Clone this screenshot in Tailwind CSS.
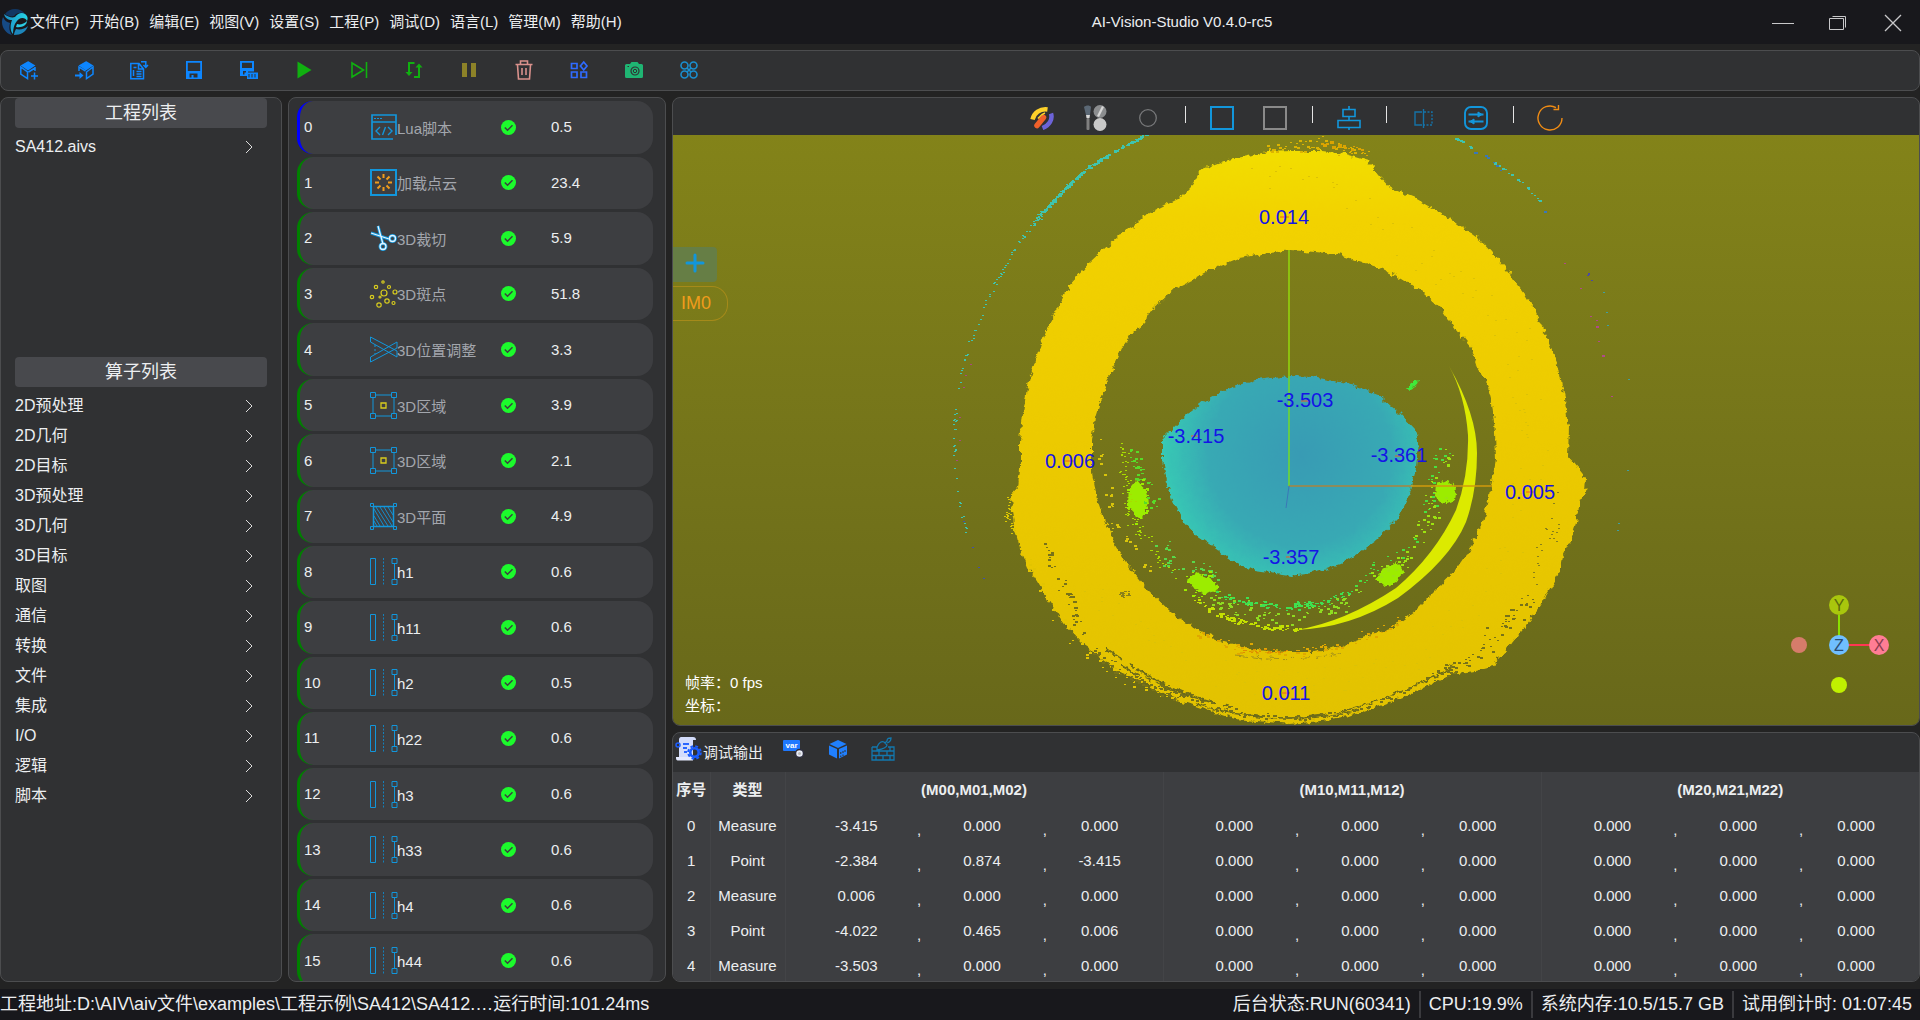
<!DOCTYPE html>
<html lang="zh-CN">
<head>
<meta charset="utf-8">
<title>AI-Vision-Studio</title>
<script src="https://cdn.jsdelivr.net/npm/@tailwindcss/browser@4"></script>
</head>
<body class="flex h-screen flex-col overflow-hidden bg-[#232323] font-['Liberation_Sans','Noto_Sans_CJK_SC',sans-serif] text-[15px] leading-5 text-[#eceef0]">

<!-- Title bar -->
<header class="relative flex h-11 shrink-0 items-center justify-between bg-[#18181c]">
  <div class="flex items-center">
    <svg class="ml-px mr-px h-7 w-7" viewBox="0 0 28 28" aria-hidden="true">
      <defs><linearGradient id="logo" x1="0" y1="0" x2="1" y2="0"><stop offset="0" stop-color="#1c8fc4"/><stop offset="1" stop-color="#25d3e6"/></linearGradient></defs>
      <path d="M4 6C9-1 20 0 24 6c-3-2-8-2-11 2-3 1-6 0-9-2z" fill="#123763"/>
      <path d="M3 6c4 3 8 4 11 3 3-4 7-5 10-3 3 2 3 5 2 7-1-3-5-4-8-2-4 3-6 8-6 15-3-3-3-9-1-14-4 0-7-2-8-6z" fill="url(#logo)"/>
      <path d="M2 9c2 4 4 5 7 6-1 4-1 8 2 12C3 25-1 16 2 9z" fill="#164a84"/>
      <path d="M16 16c3 1 7 0 10-3 0 4-5 7-11 6z" fill="#2ccbe2"/>
      <path d="M15 21c4 1 9 0 12-3-2 6-7 9-14 9 0-2 1-4 2-6z" fill="#1d86bb"/>
    </svg>
    <nav class="flex gap-[10px]">
      <button>文件(F)</button><button>开始(B)</button><button>编辑(E)</button><button>视图(V)</button><button>设置(S)</button><button>工程(P)</button><button>调试(D)</button><button>语言(L)</button><button>管理(M)</button><button>帮助(H)</button>
    </nav>
  </div>
  <h1 class="absolute left-1/2 ml-[222px] -translate-x-1/2">AI-Vision-Studio V0.4.0-rc5</h1>
  <div class="flex text-[#c8c8ca]">
    <button aria-label="最小化" class="flex h-11 w-[55px] items-center justify-center"><svg class="h-5 w-6" viewBox="0 0 24 20" fill="none" stroke="currentColor"><path d="M1 11.500h22"/></svg></button>
    <button aria-label="还原" class="flex h-11 w-[55px] items-center justify-center"><svg class="h-5 w-5" viewBox="0 0 20 20" fill="none" stroke="currentColor"><path d="M1.500 6.500h14v11h-14zM4.500 4.500h13v11"/></svg></button>
    <button aria-label="关闭" class="flex h-11 w-[55px] items-center justify-center"><svg class="h-5 w-5" viewBox="0 0 20 20" fill="none" stroke="currentColor" stroke-width="1.300"><path d="M2 3l16 16M18 3L2 19"/></svg></button>
  </div>
</header>

<!-- Main toolbar -->
<div class="mt-[6px] flex h-[41px] shrink-0 items-center rounded-lg border border-[#4c4d4f] bg-[#303133] pb-[2px]">
  <button aria-label="新建工程" class="flex w-[55px] justify-center text-[#0d86ff]"><svg class="h-5 w-5" viewBox="0 0 20 20" fill="none" stroke="currentColor" stroke-width="1.500"><path d="M9 2l6 3.500L9 9.500 3 5.500z" fill="currentColor"/><path d="M1.800 7v7l6.700 4.500V12zM16 7v4M9.500 12l6.500-4M15.500 12.500v7M12 16h7"/></svg></button>
  <button aria-label="打开工程" class="flex w-[55px] justify-center text-[#0d86ff]"><svg class="h-5 w-5" viewBox="0 0 20 20" fill="none" stroke="currentColor" stroke-width="1.500"><path d="M12 2l6 3.500-6 4-6-4z" fill="currentColor"/><path d="M19 7v7l-6.500 4.500V12zM5 11V7l6.500 4"/><path d="M1 14.500h4.500V12l4 3.500-4 3.500v-2.500H1z" fill="currentColor" stroke="none"/></svg></button>
  <button aria-label="另存文档" class="flex w-[55px] justify-center text-[#0d86ff]"><svg class="h-5 w-5" viewBox="0 0 20 20" fill="none" stroke="currentColor" stroke-width="1.500"><path d="M10 3.500H1.800v15.200h12.700V9zM9.500 4v5H14M4.500 7.500h3M4.500 10v6M7.500 11.500h5M7.500 14h5M7.500 16.500h5M12 1.800h4.800V7M14.500 5l2.300 2.500L19 5"/></svg></button>
  <button aria-label="保存" class="flex w-[55px] justify-center text-[#0d86ff]"><svg class="h-5 w-5" viewBox="0 0 20 20" fill="currentColor" fill-rule="evenodd"><path d="M2 1h16v18H2zM3.800 2.800V11h12.400V2.800zM5.500 13.500v4h2v-2.500h2v2.500h4v-4z"/></svg></button>
  <button aria-label="全部保存" class="flex w-[55px] justify-center text-[#0d86ff]"><svg class="h-5 w-5" viewBox="0 0 20 20" fill="currentColor" fill-rule="evenodd"><path d="M1 1h14v10.500H9V16H1zM3 2.800V8h10V2.800zM4 11v3.500h1.500v-2H7V11z"/><path d="M8 12.500h11v6.500H8zM9.500 14v3.500h1V14zm3 0v3.500h1V14zm3 0v3.500h1V14z"/></svg></button>
  <button aria-label="运行" class="flex w-[55px] justify-center text-[#10b010]"><svg class="h-5 w-5" viewBox="0 0 20 20" fill="currentColor"><path d="M3.500 1.500l14 8.500-14 8.500z"/></svg></button>
  <button aria-label="单步" class="flex w-[55px] justify-center text-[#10b010]"><svg class="h-5 w-5" viewBox="0 0 20 20" fill="none" stroke="currentColor" stroke-width="1.600"><path d="M3 3v14l11.500-7zM17.500 2v16"/></svg></button>
  <button aria-label="循环运行" class="flex w-[55px] justify-center text-[#10b010]"><svg class="h-5 w-5" viewBox="0 0 20 20" fill="none" stroke="currentColor" stroke-width="2"><path d="M10.500 3H5v11M10 17h5V6"/><path d="M1.500 12h7L5 16zM11.500 7.500h7L15 3.500z" fill="currentColor" stroke="none"/></svg></button>
  <button aria-label="暂停" class="flex w-[55px] justify-center text-[#8c8228]"><svg class="h-5 w-5" viewBox="0 0 20 20" fill="currentColor"><path d="M3 3h5v14H3zM12 3h5v14h-5z"/></svg></button>
  <button aria-label="删除" class="flex w-[55px] justify-center text-[#d9918c]"><svg class="h-5 w-5" viewBox="0 0 20 20" fill="none" stroke="currentColor" stroke-width="1.600"><path d="M1.500 4.500h17M6.500 4V1h7v3M3.500 5l1 14h11l1-14M8 8v7M12 8v7"/></svg></button>
  <button aria-label="组件" class="flex w-[55px] justify-center text-[#2f6bff]"><svg class="h-5 w-5" viewBox="0 0 20 20" fill="none" stroke="currentColor" stroke-width="1.700"><path d="M2.500 3.500h5.500v5H2.500zM2.500 12h5.500v5.500H2.500zM12 12h5.500v5.500H12zM14.700 2l3.300 4-3.300 4-3.300-4z"/></svg></button>
  <button aria-label="拍照" class="flex w-[55px] justify-center text-[#1fb573]"><svg class="h-5 w-5" viewBox="0 0 20 20"><path d="M2.500 4H6l1.500-2h6L15 4h2.500A1.500 1.500 0 0119 5.500v11a1.500 1.500 0 01-1.500 1.500h-15A1.500 1.500 0 011 16.500v-11A1.500 1.500 0 012.500 4z" fill="currentColor"/><circle cx="11" cy="11" r="4" fill="none" stroke="#303133" stroke-width="1.200"/><circle cx="11" cy="11" r="1.700" fill="none" stroke="#303133"/><path d="M3.500 6.500H5" stroke="#303133"/></svg></button>
  <button aria-label="布局" class="flex w-[55px] justify-center text-[#1a8fd0]"><svg class="h-5 w-5" viewBox="0 0 20 20" fill="none" stroke="currentColor" stroke-width="1.600"><circle cx="5.500" cy="5.500" r="3.500"/><circle cx="14.500" cy="5.500" r="3.500"/><circle cx="5.500" cy="14.500" r="3.500"/><circle cx="14.500" cy="14.500" r="3.500"/><path d="M8 8l4 4M12 8l-4 4"/></svg></button>
</div>

<main class="mt-[6px] flex min-h-0 flex-1 gap-[6px]">

  <!-- Project and operator lists -->
  <aside class="flex w-[282px] shrink-0 flex-col rounded-lg border border-[#4c4d4f] bg-[#303133] px-[14px] text-base">
    <h2 class="h-[30px] rounded bg-[#48494d] text-center text-lg leading-[30px]">工程列表</h2>
    <ul class="mt-1 h-[225px]" id="projects"></ul>
    <h2 class="h-[30px] rounded bg-[#48494d] text-center text-lg leading-[30px]">算子列表</h2>
    <ul class="mt-1" id="operators"></ul>
  </aside>

  <!-- Flow steps -->
  <section class="flex w-[378px] shrink-0 flex-col overflow-hidden rounded-lg border border-[#4c4d4f] bg-[#303133] pl-2 pr-3 pt-[3px]">
    <ol class="-mb-[6px] flex min-h-0 flex-1 flex-col gap-[3px]" id="steps"></ol>
  </section>

  <div class="flex min-w-0 flex-1 flex-col gap-[6px]">

    <!-- 3D view -->
    <section class="flex min-h-0 flex-1 flex-col overflow-hidden rounded-lg border border-[#4c4d4f] bg-[#303133]">
      <div class="flex h-[37px] shrink-0 items-center justify-center pt-[3px]">
        <button aria-label="配色" class="flex w-[53px] justify-center"><svg class="h-6 w-6" viewBox="0 0 24 24" fill="none" stroke-linecap="butt" stroke-width="4.500"><path d="M2.500 13.500C4 7 10 2.500 17.500 3.500" stroke="#fdd12a"/><path d="M7 19.500l6.500-8" stroke="#f0602a" stroke-width="5.500" stroke-linecap="round"/><path d="M21 7.500c2 6-2 12-8.500 14.500" stroke="#6c63d8"/><path d="M8 12.500c2-3 4-4.500 7-5.500" stroke="#fdd12a" stroke-width="1.500"/></svg></button>
        <button aria-label="渲染" class="flex w-[53px] justify-center"><svg class="h-7 w-6" viewBox="0 0 24 28"><path d="M1 3c2-2 6-2 7 0l-1 8H3z" fill="#5b6875"/><path d="M3 11h4l-.5 3h-3z" fill="#d8d8d8"/><rect x="3.500" y="14" width="3" height="12" rx="1" fill="#808080"/><circle cx="17" cy="7.500" r="6.500" fill="#8b8d8f"/><path d="M14 12l5-10 2 1-5 10z" fill="#d6d6d6"/><circle cx="17" cy="20.500" r="6.500" fill="#c9c9c9"/></svg></button>
        <button aria-label="圆形" class="flex w-[53px] justify-center"><svg class="h-6 w-6" viewBox="0 0 24 24" fill="none" stroke="#77787a" stroke-width="1.300"><circle cx="12" cy="12" r="8.300"/></svg></button>
        <span class="flex w-[21px] justify-center"><i class="-mt-2 h-[17px] w-px bg-[#e4e4e4]"></i></span>
        <button aria-label="选择区域" class="flex w-[53px] justify-center"><svg class="h-6 w-6" viewBox="0 0 24 24" fill="none" stroke="#1296db" stroke-width="2"><path d="M1 1h22v22H1z"/></svg></button>
        <button aria-label="取消区域" class="flex w-[53px] justify-center"><svg class="h-6 w-6" viewBox="0 0 24 24" fill="none" stroke="#8a8a8a" stroke-width="2"><path d="M1 1h22v22H1z"/></svg></button>
        <span class="flex w-[21px] justify-center"><i class="-mt-2 h-[17px] w-px bg-[#e4e4e4]"></i></span>
        <button aria-label="居中对齐" class="flex w-[53px] justify-center"><svg class="h-6 w-6" viewBox="0 0 24 24" fill="none" stroke="#1296db" stroke-width="1.600"><path d="M6 3.500h12v7H6zM1 14.500h22v7H1zM12 0v3.500M12 10.500v4M12 21.500V24"/></svg></button>
        <span class="flex w-[21px] justify-center"><i class="-mt-2 h-[17px] w-px bg-[#e4e4e4]"></i></span>
        <button aria-label="镜像" class="flex w-[53px] justify-center"><svg class="h-6 w-6" viewBox="0 0 24 24" fill="none" stroke="#1573a8" stroke-width="1.400"><path d="M11 6H4v13h7M12.500 3v19"/><path d="M13 6h8v13h-8" stroke-dasharray="2 1.500"/></svg></button>
        <button aria-label="参数" class="flex w-[53px] justify-center"><svg class="h-6 w-6" viewBox="0 0 24 24" fill="none" stroke="#1296db" stroke-width="1.900"><rect x="1" y="1" width="22" height="22" rx="6"/><path d="M4.500 8.500h15M4.500 15.500h15"/><path d="M14 6l4 2.500-4 2.500zM10 13l-4 2.500 4 2.500z" fill="#1296db" stroke-width="1"/></svg></button>
        <span class="flex w-[21px] justify-center"><i class="-mt-2 h-[17px] w-px bg-[#e4e4e4]"></i></span>
        <button aria-label="重置视图" class="flex w-[53px] justify-center"><svg class="h-7 w-7" viewBox="0 0 28 28" fill="none" stroke="#f08c14" stroke-width="1.400"><path d="M26 14a12 12 0 11-6-10.400M22.500 1v4.500h-5"/></svg></button>
      </div>
      <div class="relative min-h-0 flex-1 bg-linear-to-b from-[#838319] to-[#68681a]">
        <svg class="absolute inset-0 h-full w-full font-['Liberation_Sans']" viewBox="673 135 1246 590" preserveAspectRatio="xMidYMid slice" role="img" aria-label="点云">
          <defs>
            <filter id="rough" x="-5%" y="-5%" width="110%" height="110%" color-interpolation-filters="sRGB">
              <feTurbulence type="fractalNoise" baseFrequency=".16" numOctaves="3" seed="4"/>
              <feDisplacementMap in="SourceGraphic" scale="7" xChannelSelector="R" yChannelSelector="G"/>
            </filter>
            <radialGradient id="dome" gradientUnits="userSpaceOnUse" cx="1300" cy="455" r="140"><stop offset="0" stop-color="#389bb4"/><stop offset=".65" stop-color="#38a9b4"/><stop offset="1" stop-color="#37cbb4"/></radialGradient>
            <linearGradient id="ring" gradientUnits="userSpaceOnUse" x1="0" y1="150" x2="0" y2="724"><stop offset="0" stop-color="#f2de00"/><stop offset=".12" stop-color="#f2d200"/><stop offset=".5" stop-color="#ecca00"/><stop offset="1" stop-color="#e2c200"/></linearGradient>
          </defs>
          <g filter="url(#rough)">
            <path fill="url(#ring)" fill-rule="evenodd" d="M1290 151L1267 152 1224 161 1200 170 1191 187 1180 198 1144 216 1133 227 1119 235 1089 263 1069 286 1054 315 1046 330 1036 357 1027 388 1023 414 1020 441 1020 468 1018 487 1011 495 1012 512 1015 529 1020 548 1028 567 1038 583 1048 600 1065 625 1081 642 1097 655 1117 671 1144 683 1172 698 1204 709 1235 719 1290 724 1321 721 1353 715 1382 705 1411 694 1435 682 1456 673 1476 671 1492 667 1500 657 1513 642 1525 627 1537 610 1549 590 1558 575 1562 558 1570 541 1576 522 1580 500 1585 493 1586 478 1574 463 1568 456 1569 426 1567 418 1565 399 1558 365 1545 334 1535 311 1525 294 1505 267 1480 240 1447 216 1415 198 1390 188 1378 175 1368 161 1345 154 1321 151z
            M1290 250L1263 254 1239 258 1212 269 1192 280 1176 288 1152 309 1144 323 1133 332 1121 349 1111 372 1101 399 1095 418 1092 441 1092 472 1097 499 1105 522 1117 548 1129 567 1148 590 1172 613 1196 629 1224 642 1255 650 1290 652 1313 652 1341 646 1362 638 1390 629 1415 611 1439 587 1456 569 1472 546 1484 518 1491 487 1496 460 1495 433 1492 403 1486 380 1478 368 1472 349 1456 330 1443 311 1423 292 1402 279 1378 267 1358 261 1337 254 1304 251z"/>
            <path fill="none" stroke="#6c6b19" stroke-width="2" d="M1105 647q40 32 100 54M1120 665q50 28 110 42" stroke-dasharray="22 7 6 4 34 9"/>
            <path fill="none" stroke="#6c6b19" stroke-width="1.500" d="M1196 704q90 28 170 0 50-16 88-38M1225 712q80 14 140-4" stroke-dasharray="40 12 16 6 60 10"/>
            <path fill="none" stroke="#a5921a" stroke-width="1" d="M1235 655q60 8 110-2" stroke-dasharray="12 4"/>
            <path fill="url(#dome)" d="M1290 376L1255 380 1224 391 1205 401 1188 414 1172 429 1162 439 1162 460 1166 481 1173 502 1184 522 1197 536 1212 546 1231 560 1255 571 1290 576 1313 573 1341 564 1360 552 1376 541 1398 518 1411 491 1416 468 1418 441 1415 430 1398 412 1378 395 1349 384 1313 377z"/>
            <path fill="#9cec00" d="M1137 480l9 11 2 12-7 17-7-6-6-12 1-12zM1186 579l12-6 14 6 6 9-12 6-12-6zM1436 483l12-3 9 8-2 12-12 4-8-8zM1376 580l6-10 14-7 8 8-6 9-14 7z"/>
            <path fill="#3fe83a" d="M1405 389l5-6 9-3-2 5-9 5z"/>
          </g>
          <path fill="#dcea00" d="M1449 366Q1477 415 1477 453T1466 522Q1450 560 1398 598 1350 628 1296 630 1345 622 1396 588 1435 555 1456 510 1469 475 1468 435 1465 395 1449 366z"/>
          <g id="specks"></g>
          <path d="M1289 250v236" stroke="#93d80c" stroke-width="1.500"/>
          <path d="M1289 376v110" stroke="#5ccc50" stroke-width="1.500"/>
          <path d="M1289 486h122" stroke="#a8843f" stroke-width="1.500"/>
          <path d="M1411 486h81" stroke="#d29a0c" stroke-width="1.500"/>
          <path d="M1289 486l-3 22" stroke="#3a78b8"/>
          <path stroke="#ee5a1e" d="M1280 217h9M1301 401h8M1191 436h8M1065 461h9M1395 456h8M1526 492h9M1286 557h9M1282 693h8"/>
          <g fill="#1414e6" font-size="20" text-anchor="middle">
            <text x="1284" y="224">0.014</text><text x="1305" y="407">-3.503</text><text x="1196" y="443">-3.415</text><text x="1070" y="468">0.006</text>
            <text x="1399" y="462">-3.361</text><text x="1530" y="499">0.005</text><text x="1291" y="564">-3.357</text><text x="1286" y="700">0.011</text>
          </g>
        </svg>
        <div class="absolute left-0 top-28 flex flex-col items-start gap-1">
          <button aria-label="添加视图" class="flex h-[35px] w-11 items-center justify-center rounded-r bg-[#667e45]"><svg class="-mt-1 h-5 w-5" viewBox="0 0 20 20" stroke="#1296db" stroke-width="3" stroke-linecap="round"><path d="M10 2v16M2 10h16"/></svg></button>
          <button class="h-[35px] w-[55px] rounded-r-2xl border border-l-0 border-[#a58a1a] pb-[2px] pl-2 text-left text-lg leading-none text-[#f09c1c]">IM0</button>
        </div>
        <div class="absolute bottom-2 left-3 leading-[23px] text-white"><p>帧率：0 fps</p><p>坐标：</p></div>
        <svg class="absolute bottom-7 right-[29px] h-[104px] w-[102px] font-['Liberation_Sans']" viewBox="0 0 102 104" font-size="16" text-anchor="middle" role="img" aria-label="坐标轴">
          <path d="M51 22v30" stroke="#8adf00" stroke-width="2"/><path d="M60 52h22" stroke="#ff3653" stroke-width="2"/>
          <circle cx="51" cy="12" r="10" fill="#a9c60d"/><circle cx="51" cy="52" r="10" fill="#70bfff"/><circle cx="91" cy="52" r="10" fill="#ff7d94"/><circle cx="11" cy="52" r="8" fill="#d67c6a"/><circle cx="51" cy="92" r="8" fill="#c0f000"/>
          <text x="51" y="18" fill="#5c6c0c">Y</text><text x="51" y="58" fill="#2c4c70">Z</text><text x="91" y="58" fill="#8c3c50">X</text>
        </svg>
      </div>
    </section>

    <!-- Debug output -->
    <section class="flex h-[250px] shrink-0 flex-col overflow-hidden rounded-lg border border-[#4c4d4f] bg-[#303133]">
      <div class="flex h-[39px] shrink-0 items-center pl-[2px]">
        <button class="flex w-[95px] items-center"><svg class="-mt-2 h-6 w-7" viewBox="0 0 28 24"><path d="M4 2.500C4 1 5 0 6 0h12c2 0 3 1 3 3h-3v18H4z" fill="#d3dcfb"/><path d="M1 20h17v3.500H2.500C1 23.500 1 21 1 20z" fill="#e4e9fd"/><path d="M8 7h6M8 11h4M9 15h3" stroke="#2a66ff" stroke-width="1.800"/><circle cx="19.500" cy="15.500" r="4.200" fill="none" stroke="#1a5cff" stroke-width="2.600"/><circle cx="19.500" cy="15.500" r="6.300" fill="none" stroke="#1a5cff" stroke-width="2" stroke-dasharray="2.800 2.150"/><circle cx="3" cy="8" r="2" fill="none" stroke="#1d5fff" stroke-width="1.500"/></svg><span class="whitespace-nowrap">调试输出</span></button>
        <button aria-label="变量" class="flex w-[45px] justify-center"><svg class="-mt-2 h-6 w-6 font-['Liberation_Sans']" viewBox="0 0 24 24"><rect x="2" y="3" width="17" height="11" rx="1" fill="#1e78ff"/><text x="10.500" y="11" fill="#fff" font-size="8" font-weight="700" text-anchor="middle">var</text><circle cx="18.500" cy="16.500" r="4" fill="#e8ecf6" stroke="#2b2c3c" stroke-width="1.500"/><circle cx="18.500" cy="16.500" r="1.500" fill="#bbb"/></svg></button>
        <button aria-label="三维" class="flex w-[45px] justify-center"><svg class="-mt-2 h-5 w-5" viewBox="0 0 20 20" fill="#2080ff"><path d="M10 1l8.500 4L10 9 1.500 5zM1 6.500l8 3.500v9.500l-8-4zM19 6.500L11 10v9.500l8-4z"/><path d="M12.800 13v2M15 12v2M17 11v2M12.800 16.500v1.500M15 15.500v1.500" stroke="#303133"/></svg></button>
        <button aria-label="构建" class="flex w-[45px] justify-center"><svg class="-mt-2 h-6 w-6" viewBox="0 0 24 24" fill="none" stroke="#1278ae" stroke-width="1.300"><path d="M1 10h5M17 10h6v4H1v-4M1 18.500h22M1 14v9h22v-9M8 14v4.500M16 14v4.500M5 18.500V23M12 18.500V23M19 18.500V23M6 10c2-5 5-6 7-5l3 3c0 3-4 4-10 5zM14 6l2-2c0-3 2-3 4-3 0 3-1 4-4 5M19 10v4"/></svg></button>
      </div>
      <table class="w-full table-fixed bg-[#3d3e41] text-center">
        <thead>
          <tr class="h-9">
            <th scope="col" class="w-[37px] whitespace-nowrap">序号</th>
            <th scope="col" class="w-[75px] border-x border-[#434447]">类型</th>
            <th scope="col">(M00,M01,M02)</th>
            <th scope="col" class="border-x border-[#434447]">(M10,M11,M12)</th>
            <th scope="col">(M20,M21,M22)</th>
          </tr>
        </thead>
        <tbody id="matrix"></tbody>
      </table>
    </section>
  </div>
</main>

<!-- Status bar -->
<footer class="mt-[7px] flex h-[31px] shrink-0 items-center justify-between whitespace-nowrap bg-[#18181c] text-lg leading-[31px]">
  <p>工程地址:D:\AIV\aiv文件\examples\工程示例\SA412\SA412.…运行时间:101.24ms</p>
  <ul class="flex leading-[27px]">
    <li class="px-2">后台状态:RUN(60341)</li>
    <li class="border-l-2 border-[#3a3a3e] px-2">CPU:19.9%</li>
    <li class="border-l-2 border-[#3a3a3e] px-2">系统内存:10.5/15.7 GB</li>
    <li class="border-l-2 border-[#3a3a3e] px-2">试用倒计时: 01:07:45</li>
  </ul>
</footer>

<script>
const chevron = '<svg class="mr-[14px] h-3 w-2" viewBox="0 0 8 12" fill="none" stroke="#dcdcdc"><path d="M1 0l6 6-6 6"/></svg>';
const listItem = t => `<li><button class="flex h-[30px] w-full items-center justify-between">${t}${chevron}</button></li>`;
projects.innerHTML = listItem('SA412.aivs');
operators.innerHTML = ['2D预处理','2D几何','2D目标','3D预处理','3D几何','3D目标','取图','通信','转换','文件','集成','I/O','逻辑','脚本'].map(listItem).join('');

// Step icons, drawn on a 27-unit grid
const B = '#1296db';
const corners = `<path d="M3 3h21v21H3z" fill="none" stroke="${B}"/><g fill="#3d3e41" stroke="${B}"><path d="M.5.5h5v5h-5zM21.500.5h5v5h-5zM.5 21.500h5v5h-5zM21.500 21.500h5v5h-5z"/></g>`;
const icons = {
  code: `<path d="M26 21V1H2v24h21M2 8h24" fill="none" stroke="${B}" stroke-width="1.700"/><path d="M4 4.500h8" stroke="${B}" stroke-dasharray="2 1"/><path d="M10 13l-4 4 4 4M18 13l4 4-4 4M15.500 13l-3 8" fill="none" stroke="${B}" stroke-width="1.400"/>`,
  cloud: `<path d="M1 1h25v25H1z" fill="none" stroke="${B}" stroke-width="2"/><path d="M13.500 5v4M13.500 18v4M5 13.500h4M18 13.500h4M7.500 7.500l3 3M16.500 16.500l3 3M19.500 7.500l-3 3M10.500 16.500l-3 3" stroke="#f09c1c" stroke-width="2"/>`,
  cut: `<g fill="none" stroke="${B}" stroke-width="3"><path d="M8 1l5 18M1 8l18 6"/><circle cx="13" cy="21.500" r="3"/><circle cx="22.500" cy="13.500" r="3"/></g><g fill="none" stroke="#e4f4ff" stroke-width="1.300"><path d="M8 1l5 18M1 8l18 6"/><circle cx="13" cy="21.500" r="3"/><circle cx="22.500" cy="13.500" r="3"/></g>`,
  blob: `<g fill="none" stroke="#d8cc1e" stroke-width="1.200"><circle cx="14" cy="13" r="3"/><circle cx="13" cy="2" r="1.200"/><circle cx="6" cy="7" r="1.700"/><circle cx="19" cy="7" r="1.500"/><circle cx="25" cy="12" r="2"/><circle cx="2" cy="17" r="1.700"/><circle cx="17" cy="21" r="2.200"/><circle cx="9" cy="25" r="2.200"/><circle cx="23.500" cy="23" r="1.500"/><circle cx="10" cy="17" r="1"/></g>`,
  adjust: `<path d="M.5 1v5L27 21v-6zM.5 26v-5L27 6v6z" fill="none" stroke="${B}"/><path d="M5 9v9" stroke="${B}" stroke-dasharray="2 2"/>`,
  area: corners + '<path d="M11 11h5v5h-5z" fill="none" stroke="#d8cc1e" stroke-width="1.300"/>',
  plane: `<path d="M3.500 3.500h20v20h-20z" fill="none" stroke="${B}" stroke-width="1.500"/><path d="M4 13l6 10M4 6l10 17M6 4l12 19M10 4l12 19M14 4l9 15M18 4l5 8M4 18l3 5" stroke="${B}" stroke-width=".9"/><path d="M.5.5h3v3h-3zM23.500.5h3v3h-3zM.5 23.500h3v3h-3zM23.500 23.500h3v3h-3z" fill="none" stroke="${B}"/>`,
  height: `<g fill="none" stroke="${B}"><path d="M.5.5h5v26h-5zM24.500 6v15M22 .5h5v5h-5zM22 21.500h5v5h-5z"/><path d="M13.500 0v27" stroke-dasharray="2 1.500" stroke="#1480bb"/></g>`
};
const tick = '<svg class="h-[15px] w-[15px]" viewBox="0 0 15 15" role="img" aria-label="成功"><circle cx="7.500" cy="7.500" r="7.500" fill="#1cfa2c"/><path d="M3.800 7.500l2.700 2.700 5-5" fill="none" stroke="#3d3e41" stroke-width="1.500"/></svg>';
const steps = [['code','Lua脚本','0.5'],['cloud','加载点云','23.4'],['cut','3D裁切','5.9'],['blob','3D斑点','51.8'],['adjust','3D位置调整','3.3'],['area','3D区域','3.9'],['area','3D区域','2.1'],['plane','3D平面','4.9'],['height','h1','0.6'],['height','h11','0.6'],['height','h2','0.5'],['height','h22','0.6'],['height','h3','0.6'],['height','h33','0.6'],['height','h4','0.6'],['height','h44','0.6']];
document.getElementById('steps').innerHTML = steps.map(([icon, name, ms], i) =>
  `<li class="flex min-h-0 flex-1 items-center rounded-2xl border-l-3 bg-[#3d3e41] pl-1 ${i ? 'border-[#008000]' : 'border-[#0000ff]'}">
    <span class="w-[66px]">${i}</span>
    <svg class="h-[27px] w-[27px] shrink-0 overflow-visible" viewBox="0 0 27 27">${icons[icon]}</svg>
    <span class="w-[104px] pt-[3px] ${i < 8 ? 'text-[#a3a6ad]' : ''}">${name}</span>
    ${tick}<span class="pl-[35px]">${ms}</span></li>`).join('');

// Transform rows
const z = ['0.000','0.000','0.000'];
const rows = [['Measure','-3.415','0.000','0.000'],['Point','-2.384','0.874','-3.415'],['Measure','0.006','0.000','0.000'],['Point','-4.022','0.465','0.006'],['Measure','-3.503','0.000','0.000']];
const triple = v => `<div class="grid grid-cols-[118fr_8px_118fr_8px_102fr] px-3"><span>${v[0]}</span><span class="-mb-1 pt-1">,</span><span>${v[1]}</span><span class="-mb-1 pt-1">,</span><span>${v[2]}</span></div>`;
matrix.innerHTML = rows.map(([type, ...v], i) =>
  `<tr class="h-[35px]"><td>${i}</td><td class="border-x border-[#434447]">${type}</td><td>${triple(v)}</td><td class="border-x border-[#434447]">${triple(z)}</td><td>${triple(z)}</td></tr>`).join('');

// Scattered cloud points
let seed = 7;
const rnd = () => (seed = (seed * 16807) % 2147483647) / 2147483647;
const g = () => rnd() + rnd() + rnd() - 1.5;
let out = '';
// Points along a polyline; "fade" thins them towards its end
function along(color, n, spread, size, pts, fade = 0) {
  const seg = pts.slice(1).map((p, i) => Math.hypot(p[0] - pts[i][0], p[1] - pts[i][1]));
  const total = seg.reduce((a, b) => a + b);
  let d = '';
  for (let k = 0; k < n; k++) {
    let t = Math.pow(rnd(), 1 + fade) * total, i = 0;
    while (i < seg.length - 1 && t > seg[i]) t -= seg[i++];
    const u = t / seg[i], x = pts[i][0] + (pts[i+1][0] - pts[i][0]) * u + g() * spread, y = pts[i][1] + (pts[i+1][1] - pts[i][1]) * u + g() * spread;
    const s = 1 + Math.floor(rnd() * size);
    d += `M${Math.round(x)} ${Math.round(y)}h${s + 1}v${s}h-${s + 1}z`;
  }
  out += `<path fill="${color}" d="${d}"/>`;
}
along('#3fc4ae', 150, 1, 2, [[1146,134],[1113,151],[1085,169],[1062,190],[1042,212]]);
along('#3fc4ae', 120, 2, 1, [[1042,212],[1014,248],[986,300],[963,361],[955,411],[953,464],[959,497],[966,541]], 1);
along('#3fc4ae', 28, 1, 2, [[1451,135],[1480,152],[1502,168],[1525,185],[1545,207]]);
along('#3a78b8', 8, 3, 2, [[1460,140],[1525,187],[1545,210]]);
along('#b04a8a', 8, 3, 2, [[1555,235],[1557,246],[1595,321],[1612,397]]);
along('#4a48a8', 4, 2, 1, [[1582,259],[1599,298]]);
along('#3fa0a0', 7, 4, 1, [[1598,290],[1628,376],[1635,433],[1604,583]]);
along('#a84a80', 6, 3, 1, [[988,313],[971,350],[960,410],[958,465]]);
along('#4050b0', 4, 2, 1, [[963,518],[971,546],[988,590]]);
along('#dcb400', 55, 7, 2, [[1265,150],[1290,146],[1330,144],[1368,155]]);
along('#dca400', 20, 4, 3, [[1320,143],[1345,146],[1365,152]]);
along('#dcc800', 30, 4, 1, [[1010,498],[1006,514],[1013,532]]);
along('#e2c400', 40, 6, 2, [[1020,548],[1048,606],[1081,648],[1120,678],[1180,704]]);
along('#d8c40a', 30, 6, 2, [[1096,440],[1104,470],[1112,525],[1135,545],[1150,580]]);
along('#a8dc00', 80, 6, 1, [[1121,445],[1125,480],[1130,520],[1150,545],[1175,575]]);
along('#58dc28', 40, 7, 2, [[1134,450],[1142,480],[1152,505]]);
along('#58d84a', 40, 7, 2, [[1160,540],[1175,568],[1205,565],[1215,580]]);
along('#3fe050', 110, 4, 2, [[1218,594],[1250,603],[1290,607],[1320,602],[1352,592]]);
along('#8edc20', 90, 9, 2, [[1205,600],[1250,612],[1290,618],[1330,608],[1365,595]]);
along('#c4e000', 90, 3, 2, [[1195,600],[1225,617],[1262,626],[1300,630]]);
along('#9ce410', 70, 9, 2, [[1452,450],[1436,485],[1430,520],[1412,550],[1395,568],[1370,580]]);
along('#48e040', 40, 7, 2, [[1445,440],[1432,478],[1425,520],[1400,555],[1366,572],[1362,590]]);
along('#9cec00', 50, 12, 2, [[1134,488],[1140,512]]);
along('#9cec00', 50, 12, 2, [[1192,580],[1212,588]]);
along('#e0a800', 80, 5, 2, [[1196,632],[1240,649],[1290,652],[1340,646],[1365,636],[1400,620]]);
along('#e08c00', 25, 2, 1, [[1240,650],[1290,652]]);
// Gaps in the ring
along('#77721a', 40, 5, 2, [[1042,540],[1052,565],[1070,600],[1085,635]]);
along('#77721a', 90, 6, 2, [[1090,648],[1120,672],[1170,692],[1240,713]]);
along('#77721a', 70, 8, 2, [[1530,600],[1500,625],[1480,655],[1455,665],[1420,682]]);
along('#77721a', 60, 3, 2, [[1411,688],[1360,708],[1310,717],[1240,716]]);
along('#8a801a', 22, 4, 1, [[1118,592],[1130,596]]);
along('#8a801a', 24, 9, 1, [[1552,480],[1556,520],[1540,560],[1525,600]]);
along('#dcc206', 140, 20, 1, [[1240,170],[1340,190],[1440,260],[1520,340],[1530,460],[1480,600],[1400,665],[1290,685],[1180,660],[1090,580]]);
specks.innerHTML = out;
</script>
</body>
</html>
